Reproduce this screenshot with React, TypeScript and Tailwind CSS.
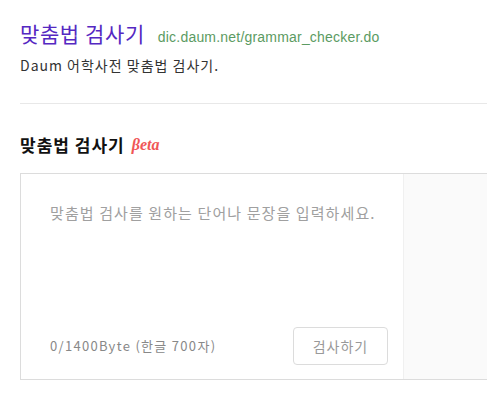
const kr = "font-['Noto_Sans_CJK_KR',sans-serif]";

const App = () => {
  return (
    <div className="w-[487px] h-[407px] overflow-hidden bg-white">
      <div className="pl-5 pt-[21px]">
        <div className="flex items-baseline gap-[13px]">
          <h1 className={`${kr} text-[21px] leading-6 tracking-[0.6px] text-[#5528c2]`}>
            맞춤법 검사기
          </h1>
          <span className="font-['Liberation_Sans',sans-serif] text-[14px] leading-6 tracking-[0.2px] text-[#5b9b62]">
            dic.daum.net/grammar_checker.do
          </span>
        </div>
        <p className={`${kr} mt-[8px] text-[14px] leading-4 tracking-[1px] text-[#333]`}>
          Daum 어학사전 맞춤법 검사기.
        </p>
        <div className="mt-[30px] border-t border-[#e8e8e8]" />

        <div className="mt-[31px] flex items-center gap-[7px]">
          <h2 className={`${kr} text-[17px] leading-5 tracking-[1px] font-bold text-[#111]`}>
            맞춤법 검사기
          </h2>
          <span className="font-['Liberation_Serif',serif] italic font-bold text-[16px] leading-5 text-[#f05656]">
            βeta
          </span>
        </div>

        <div className="mt-[18px] flex w-[620px] h-[207px] border border-[#dcdcdc]">
          <div className="w-[382px] flex flex-col justify-between pt-[29px] pl-[29px] pr-[15px] pb-[14px]">
            <p className={`${kr} text-[15px] leading-5 tracking-[1.1px] text-[#a0a0a0]`}>
              맞춤법 검사를 원하는 단어나 문장을 입력하세요.
            </p>
            <div className="flex items-center justify-between">
              <span className={`${kr} text-[13px] leading-4 tracking-[1.3px] text-[#888]`}>
                0/1400Byte (한글 700자)
              </span>
              <button
                className={`${kr} w-[95px] h-[38px] rounded-[4px] border border-[#dcdcdc] bg-white text-[14px] tracking-[1px] text-[#999]`}
              >
                검사하기
              </button>
            </div>
          </div>
          <div className="flex-1 bg-[#fafafa] border-l border-[#f0f0f0]" />
        </div>
      </div>
    </div>
  );
};

export default App;
